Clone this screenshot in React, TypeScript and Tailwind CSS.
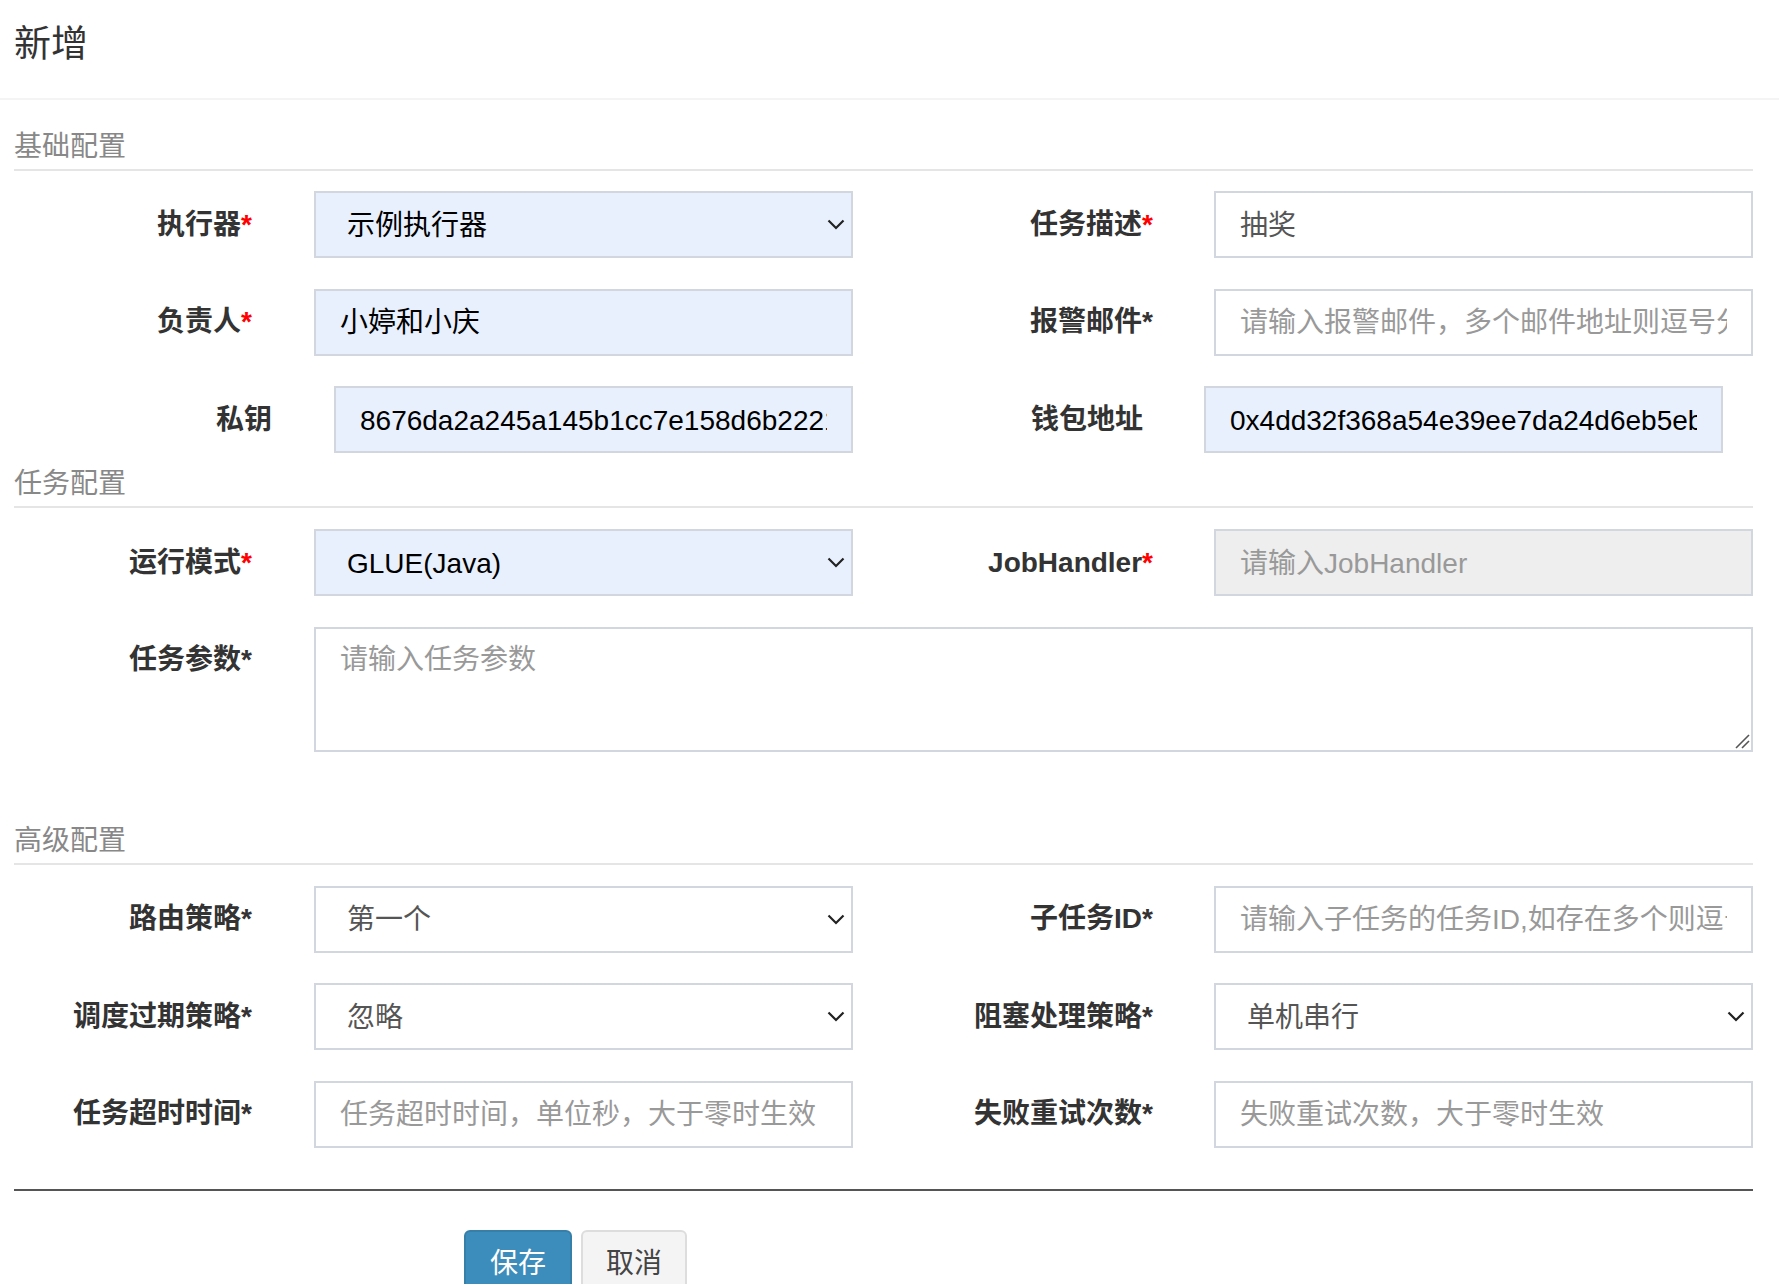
import React from "react";

const FONT = "font-['Liberation_Sans','Noto_Sans_CJK_SC',sans-serif]";

function Chevron() {
  return (
    <svg width="18" height="11" viewBox="0 0 18 11" className="shrink-0">
      <polyline points="1.5,1.5 9,9 16.5,1.5" fill="none" stroke="#222" strokeWidth="2.2" strokeLinejoin="miter" />
    </svg>
  );
}

function Label({ text, star, red, w }: { text: string; star?: boolean; red?: boolean; w: string }) {
  return (
    <div className={`${w} shrink-0 h-[67px] flex items-center justify-end text-[28px] font-bold text-[#333] whitespace-nowrap`}>
      <span>{text}</span>
      {star && <span className={red ? "text-[#ff0000]" : "text-[#333]"}>*</span>}
    </div>
  );
}

function Input({
  value,
  placeholder,
  bg = "bg-white",
  color = "text-[#555]",
  w,
}: {
  value?: string;
  placeholder?: string;
  bg?: string;
  color?: string;
  w: string;
}) {
  return (
    <div className={`${w} shrink-0 h-[67px] border-2 border-[#d2d6de] ${bg} pl-[24px] pr-[24px] pt-[2px] flex items-center`}>
      <div className={`w-full overflow-hidden whitespace-nowrap text-[28px] ${value ? color : "text-[#999]"}`}>
        {value ?? placeholder}
      </div>
    </div>
  );
}

function Select({ value, bg = "bg-white", color = "text-[#555]", w }: { value: string; bg?: string; color?: string; w: string }) {
  return (
    <div className={`${w} shrink-0 h-[67px] border-2 border-[#d2d6de] ${bg} pl-[31px] pr-[6px] flex items-center justify-between`}>
      <div className={`text-[28px] pt-[2px] whitespace-nowrap ${color}`}>{value}</div>
      <Chevron />
    </div>
  );
}

function Section({ title, mt }: { title: string; mt: string }) {
  return (
    <div className={`${mt} leading-[40px] pb-[2px] border-b-2 border-[#e5e5e5] text-[28px] text-[#888]`}>{title}</div>
  );
}

export default function App() {
  return (
    <div className={`${FONT} w-[1779px] h-[1284px] overflow-hidden bg-white`}>
      <div className="h-[100px] border-b-2 border-[#f4f4f4] px-[14px] pt-[20px]">
        <div className="text-[37px] leading-[50px] text-[#333]">新增</div>
      </div>

      <div className="pl-[14px] pr-[26px]">
        <Section title="基础配置" mt="mt-[27px]" />

        <div className="mt-[20px] flex">
          <Label w="w-[238px]" text="执行器" star red />
          <div className="w-[62px] shrink-0" />
          <Select w="w-[539px]" value="示例执行器" bg="bg-[#e8f0fe]" color="text-black" />
          <Label w="w-[300px]" text="任务描述" star red />
          <div className="w-[61px] shrink-0" />
          <Input w="w-[539px]" value="抽奖" />
        </div>

        <div className="mt-[30.5px] flex">
          <Label w="w-[238px]" text="负责人" star red />
          <div className="w-[62px] shrink-0" />
          <Input w="w-[539px]" value="小婷和小庆" bg="bg-[#e8f0fe]" color="text-black" />
          <Label w="w-[300px]" text="报警邮件" star />
          <div className="w-[61px] shrink-0" />
          <Input w="w-[539px]" placeholder="请输入报警邮件，多个邮件地址则逗号分隔" />
        </div>

        <div className="mt-[30.5px] flex">
          <Label w="w-[258px]" text="私钥" />
          <div className="w-[62px] shrink-0" />
          <Input w="w-[519px]" value="8676da2a245a145b1cc7e158d6b2221f4e9a0c7d3b5e" bg="bg-[#e8f0fe]" color="text-black" />
          <Label w="w-[290px]" text="钱包地址" />
          <div className="w-[61px] shrink-0" />
          <Input w="w-[519px]" value="0x4dd32f368a54e39ee7da24d6eb5eb3a1c09f7e2" bg="bg-[#e8f0fe]" color="text-black" />
        </div>

        <Section title="任务配置" mt="mt-[11px]" />

        <div className="mt-[21px] flex">
          <Label w="w-[238px]" text="运行模式" star red />
          <div className="w-[62px] shrink-0" />
          <Select w="w-[539px]" value="GLUE(Java)" bg="bg-[#e8f0fe]" color="text-black" />
          <Label w="w-[300px]" text="JobHandler" star red />
          <div className="w-[61px] shrink-0" />
          <Input w="w-[539px]" placeholder="请输入JobHandler" bg="bg-[#eeeeee]" />
        </div>

        <div className="mt-[30.5px] flex items-start">
          <Label w="w-[238px]" text="任务参数" star />
          <div className="w-[62px] shrink-0" />
          <div className="relative flex-1 h-[125px] border-2 border-[#d2d6de] bg-white pl-[24px] pt-[11px]">
            <div className="text-[28px] leading-[40px] text-[#999]">请输入任务参数</div>
            <svg className="absolute right-[1px] bottom-[1px]" width="16" height="16" viewBox="0 0 16 16">
              <line x1="2" y1="15" x2="15" y2="2" stroke="#555" strokeWidth="1.6" />
              <line x1="8" y1="15" x2="15" y2="8" stroke="#555" strokeWidth="1.6" />
            </svg>
          </div>
        </div>

        <Section title="高级配置" mt="mt-[69px]" />

        <div className="mt-[21px] flex">
          <Label w="w-[238px]" text="路由策略" star />
          <div className="w-[62px] shrink-0" />
          <Select w="w-[539px]" value="第一个" />
          <Label w="w-[300px]" text="子任务ID" star />
          <div className="w-[61px] shrink-0" />
          <Input w="w-[539px]" placeholder="请输入子任务的任务ID,如存在多个则逗号分隔" />
        </div>

        <div className="mt-[30.5px] flex">
          <Label w="w-[238px]" text="调度过期策略" star />
          <div className="w-[62px] shrink-0" />
          <Select w="w-[539px]" value="忽略" />
          <Label w="w-[300px]" text="阻塞处理策略" star />
          <div className="w-[61px] shrink-0" />
          <Select w="w-[539px]" value="单机串行" />
        </div>

        <div className="mt-[30.5px] flex">
          <Label w="w-[238px]" text="任务超时时间" star />
          <div className="w-[62px] shrink-0" />
          <Input w="w-[539px]" placeholder="任务超时时间，单位秒，大于零时生效" />
          <Label w="w-[300px]" text="失败重试次数" star />
          <div className="w-[61px] shrink-0" />
          <Input w="w-[539px]" placeholder="失败重试次数，大于零时生效" />
        </div>

        <div className="mt-[41px] h-[2px] bg-[#555]" />

        <div className="mt-[39px] flex gap-[9px] pl-[450px]">
          <div className="w-[108px] h-[68px] rounded-[6px] bg-[#3c8dbc] border-2 border-[#367fa9] flex items-center justify-center text-[28px] text-white">
            保存
          </div>
          <div className="w-[106px] h-[68px] rounded-[6px] bg-[#f4f4f4] border-2 border-[#ddd] flex items-center justify-center text-[28px] text-[#444]">
            取消
          </div>
        </div>
      </div>
    </div>
  );
}
